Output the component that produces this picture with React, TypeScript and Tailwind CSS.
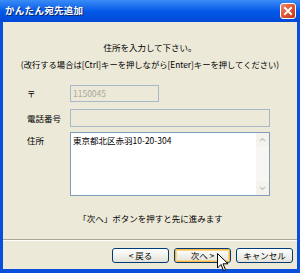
import React from "react";

const jp = { fontFamily: '"Noto Sans CJK JP", "Noto Sans", sans-serif' };

function XpButton({ label, def }: { label: string; def?: boolean }) {
  return (
    <div className="h-[15px] w-[57px] rounded-[3px] border border-[#003C74] bg-gradient-to-b from-[#FFFFFF] to-[#E3E2DA] p-0 flex items-center justify-center">
      <div
        className={
          "h-full w-full rounded-[2px] flex items-center justify-center text-[8.5px] leading-none text-black " +
          (def ? "border border-[#F5B649] shadow-[inset_0_0_0_1px_#FBD889]" : "")
        }
        style={jp}
      >
        {label}
      </div>
    </div>
  );
}

export default function App() {
  return (
    <div className="relative w-[300px] h-[273px] flex flex-col bg-[#0A4FDB] overflow-hidden" style={jp}>
      {/* Title bar */}
      <div className="h-[22px] flex items-center justify-between pl-[5px] pr-[4px] bg-gradient-to-b from-[#3A8CF6] via-[#0459E8] to-[#0048D6]">
        <span className="text-white font-bold text-[9.5px] leading-none tracking-[0.3px] [text-shadow:1px_1px_0_#0A246A]">
          かんたん宛先追加
        </span>
        <div className="w-[16px] h-[16px] rounded-[3px] border border-white bg-gradient-to-br from-[#F08A6A] via-[#E0532B] to-[#C0391A] flex items-center justify-center">
          <svg width="10" height="10" viewBox="0 0 10 10">
            <path d="M2 2 L8 8 M8 2 L2 8" stroke="white" strokeWidth="2" strokeLinecap="square" />
          </svg>
        </div>
      </div>

      {/* Body */}
      <div className="flex-1 mx-[3px] mb-[4px] bg-[#ECE9D8] flex flex-col text-black">
        <div className="mt-[19px] text-center text-[8.5px] leading-[12px]">住所を入力して下さい。</div>
        <div className="mt-[5px] text-center text-[8.3px] leading-[12px] whitespace-nowrap">
          (改行する場合は[Ctrl]キーを押しながら[Enter]キーを押してください)
        </div>

        {/* Rows */}
        <div className="mt-[15px] flex items-center">
          <div className="w-[67px] pl-[24px] text-[8.5px] leading-none">〒</div>
          <div className="w-[89px] h-[17px] border border-[#A9B8C9] bg-[#ECE9D8] flex items-center pl-[2px] text-[8.5px] text-[#ACA899]">
            1150045
          </div>
        </div>
        <div className="mt-[7px] flex items-center">
          <div className="w-[67px] pl-[24px] text-[8.5px] leading-none">電話番号</div>
          <div className="w-[200px] h-[18px] border border-[#A9B8C9] bg-[#ECE9D8]" />
        </div>
        <div className="mt-[5px] flex items-start">
          <div className="w-[67px] pl-[24px] pt-[4px] text-[8.5px] leading-none">住所</div>
          <div className="w-[200px] h-[64px] border border-[#7F9DB9] bg-white flex">
            <div className="flex-1 pl-[2px] pt-[2px] text-[8.5px] leading-[11px]">東京都北区赤羽10-20-304</div>
            <div className="w-[13px] h-full bg-[#F7F6F2] flex flex-col justify-between">
              <div className="h-[13px] flex items-center justify-center bg-[#F3F2EC] rounded-[2px]">
                <svg width="7" height="5" viewBox="0 0 7 5">
                  <path d="M1 4 L3.5 1.5 L6 4" stroke="#C9C7BA" strokeWidth="1.3" fill="none" />
                </svg>
              </div>
              <div className="h-[13px] flex items-center justify-center bg-[#F3F2EC] rounded-[2px]">
                <svg width="7" height="5" viewBox="0 0 7 5">
                  <path d="M1 1 L3.5 3.5 L6 1" stroke="#C9C7BA" strokeWidth="1.3" fill="none" />
                </svg>
              </div>
            </div>
          </div>
        </div>

        <div className="mt-[16px] text-center text-[8.5px] leading-[12px] pl-[1px]">「次へ」ボタンを押すと先に進みます</div>

        <div className="mt-[15px] h-[2px] border-t border-[#ACA899] border-b border-b-white" />

        <div className="mt-[7px] flex justify-end gap-[5px] pr-[4px]">
          <XpButton label="< 戻る" />
          <XpButton label="次へ >" def />
          <XpButton label="キャンセル" />
        </div>
      </div>

      {/* Mouse cursor overlay */}
      <svg className="absolute left-[217px] top-[253px]" width="12" height="19" viewBox="0 0 12 19">
        <path
          d="M0.5 0.5 L0.5 15 L4 11.5 L6.5 17.5 L8.5 16.7 L6 10.8 L11 10.8 Z"
          fill="white"
          stroke="black"
          strokeWidth="1"
          strokeLinejoin="miter"
        />
      </svg>
    </div>
  );
}
